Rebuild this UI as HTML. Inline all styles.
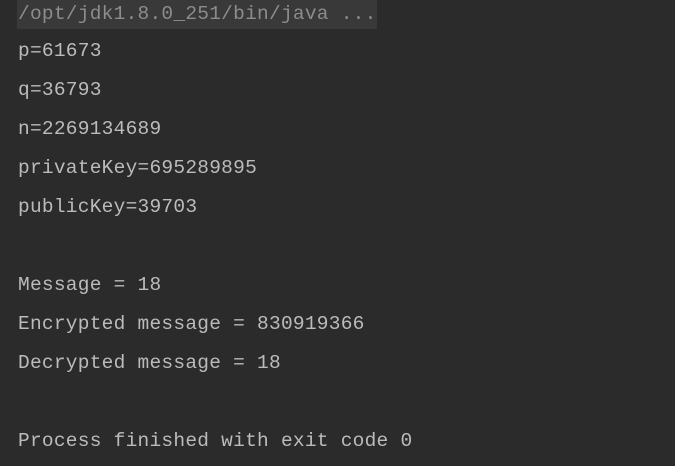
<!DOCTYPE html>
<html><head><meta charset="utf-8"><style>
html,body{margin:0;padding:0;background:#2b2b2b;width:675px;height:466px;overflow:hidden}
.l{position:absolute;left:18px;font-family:"Liberation Mono","DejaVu Sans Mono",monospace;font-size:19.5px;letter-spacing:0.25px;line-height:24px;color:#bbbbbb;white-space:pre}
.hl{position:absolute;left:17px;top:0;width:360px;height:29px;background:#393939}
</style></head><body>
<div class="hl"></div>
<div class="l" style="top:2px;color:#8c8c8c">/opt/jdk1.8.0_251/bin/java ...</div>
<div class="l" style="top:39px">p=61673</div>
<div class="l" style="top:78px">q=36793</div>
<div class="l" style="top:117px">n=2269134689</div>
<div class="l" style="top:156px">privateKey=695289895</div>
<div class="l" style="top:195px">publicKey=39703</div>
<div class="l" style="top:273px">Message = 18</div>
<div class="l" style="top:312px">Encrypted message = 830919366</div>
<div class="l" style="top:351px">Decrypted message = 18</div>
<div class="l" style="top:429px">Process finished with exit code 0</div>
</body></html>
